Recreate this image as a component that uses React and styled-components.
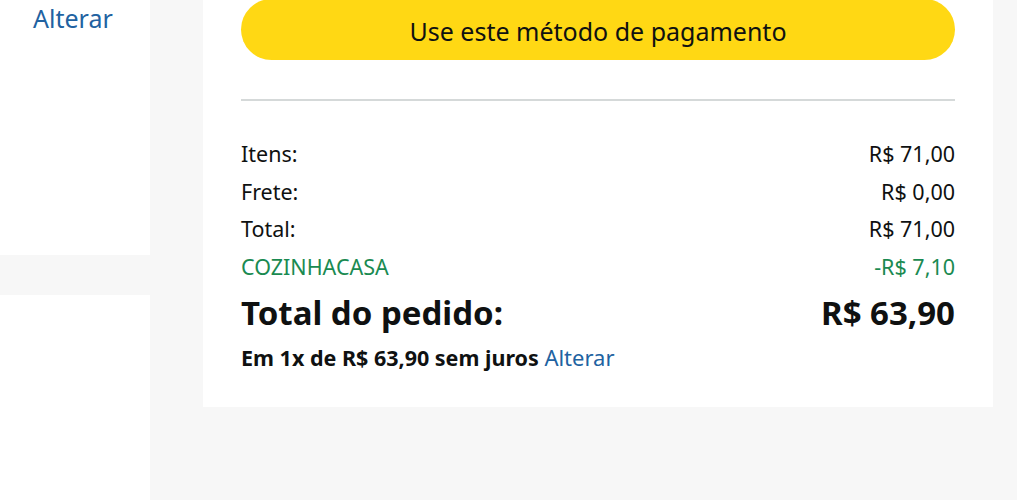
import React from "react";
import styled, { createGlobalStyle } from "styled-components";

const GlobalStyle = createGlobalStyle`
  html, body {
    margin: 0;
    padding: 0;
    background: #f7f7f7;
    font-family: "Noto Sans", "Open Sans", Arial, sans-serif;
    color: #0f1111;
  }
`;

const Page = styled.div`
  display: flex;
  width: 1017px;
  height: 500px;
  overflow: hidden;
  background: #f7f7f7;
`;

const SideColumn = styled.div`
  display: flex;
  flex-direction: column;
  width: 150px;
  flex-shrink: 0;
`;

const SidePanel = styled.div`
  background: #fff;
  height: ${p => p.$height}px;
  padding: ${p => (p.$padded ? "2px 0 0 33px" : "0")};
  box-sizing: border-box;
  margin-bottom: ${p => p.$gap || 0}px;
  flex-grow: ${p => (p.$grow ? 1 : 0)};
  line-height: 1.35;
`;

const Link = styled.a`
  color: #2162a1;
  text-decoration: none;
  cursor: pointer;
  font-weight: 400;
  font-size: ${p => p.$size || 22}px;
`;

const Main = styled.div`
  flex: 1;
  padding: 0 24px 0 53px;
`;

const Card = styled.div`
  background: #fff;
  height: 408px;
  padding: 0 38px;
  box-sizing: border-box;
`;

const PayButton = styled.button`
  display: block;
  width: 100%;
  height: 61px;
  margin-top: -1px;
  border: none;
  border-radius: 31px;
  background: #ffd814;
  color: #0f1111;
  font-family: inherit;
  font-size: 25px;
  padding: 3px 0 0;
  cursor: pointer;
`;

const Divider = styled.hr`
  border: none;
  border-top: 2px solid #d5d9d9;
  margin: 39px 0 34px;
`;

const Row = styled.div`
  display: flex;
  justify-content: space-between;
  align-items: center;
  height: 37.5px;
  font-size: 21.5px;
  color: ${p => (p.$green ? "#1a8a51" : "#0f1111")};
`;

const TotalRow = styled.div`
  display: flex;
  justify-content: space-between;
  align-items: center;
  height: 48px;
  margin-top: 3px;
  font-size: 33px;
  font-weight: 700;
`;

const Installments = styled.div`
  margin-top: 6px;
  font-size: 21.5px;
  font-weight: 700;
`;

const summary = [
  { label: "Itens:", value: "R$ 71,00" },
  { label: "Frete:", value: "R$ 0,00" },
  { label: "Total:", value: "R$ 71,00" },
  { label: "COZINHACASA", value: "-R$ 7,10", green: true },
];

export default function App() {
  return (
    <>
      <GlobalStyle />
      <Page>
        <SideColumn>
          <SidePanel $height={255} $gap={40} $padded>
            <Link $size={25}>Alterar</Link>
          </SidePanel>
          <SidePanel $grow />
        </SideColumn>
        <Main>
          <Card>
            <PayButton>Use este método de pagamento</PayButton>
            <Divider />
            {summary.map(item => (
              <Row key={item.label} $green={item.green}>
                <span>{item.label}</span>
                <span>{item.value}</span>
              </Row>
            ))}
            <TotalRow>
              <span>Total do pedido:</span>
              <span>R$ 63,90</span>
            </TotalRow>
            <Installments>
              Em 1x de R$ 63,90 sem juros <Link>Alterar</Link>
            </Installments>
          </Card>
        </Main>
      </Page>
    </>
  );
}
